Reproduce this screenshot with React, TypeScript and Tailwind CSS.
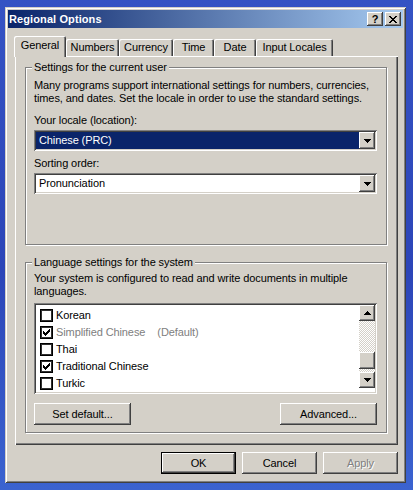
import React from "react";

const RAISED =
  "shadow-[inset_-1px_-1px_#404040,inset_1px_1px_#ffffff,inset_-2px_-2px_#808080,inset_2px_2px_#d4d0c8]";
const SUNKEN =
  "shadow-[inset_1px_1px_#808080,inset_-1px_-1px_#ffffff,inset_2px_2px_#404040,inset_-2px_-2px_#d4d0c8]";

function DownTri() {
  return (
    <svg width="7" height="4" viewBox="0 0 7 4" shapeRendering="crispEdges">
      <path d="M0 0h7v1H0zM1 1h5v1H1zM2 2h3v1H2zM3 3h1v1H3z" fill="#000" />
    </svg>
  );
}

function UpTri() {
  return (
    <svg width="7" height="4" viewBox="0 0 7 4" shapeRendering="crispEdges">
      <path d="M3 0h1v1H3zM2 1h3v1H2zM1 2h5v1H1zM0 3h7v1H0z" fill="#000" />
    </svg>
  );
}

function CheckBox({ checked }: { checked?: boolean }) {
  return (
    <div className="w-[13px] h-[13px] shrink-0 bg-white shadow-[inset_0_0_0_1px_#000000,inset_0_0_0_2px_#303030]">
      {checked && (
        <svg width="13" height="13" viewBox="0 0 13 13" shapeRendering="crispEdges">
          <path
            d="M3 5h1v3H3zM4 6h1v3H4zM5 7h1v3H5zM6 6h1v3H6zM7 5h1v3H7zM8 4h1v3H8zM9 3h1v3H9z"
            fill="#000"
          />
        </svg>
      )}
    </div>
  );
}

function Combo({ value, selected }: { value: string; selected?: boolean }) {
  return (
    <div className={`flex h-[21px] w-full p-[2px] bg-white ${SUNKEN}`}>
      <div
        className={
          selected
            ? "flex-1 flex items-center pl-[3px] bg-[#0a246a] text-white"
            : "flex-1 flex items-center pl-[3px] bg-white text-black"
        }
      >
        {value}
      </div>
      <div className={`w-[16px] h-[17px] bg-[#d4d0c8] flex items-center justify-center ${RAISED}`}>
        <DownTri />
      </div>
    </div>
  );
}

function Tab({ label, width, selected }: { label: string; width: string; selected?: boolean }) {
  if (selected) {
    return (
      <div
        className={`${width} h-[21px] flex justify-center pt-[3px] bg-[#d4d0c8] rounded-t-[2px] shadow-[inset_1px_1px_#ffffff,inset_-1px_0_#404040,inset_-2px_0_#808080]`}
      >
        {label}
      </div>
    );
  }
  return (
    <div
      className={`${width} h-[17px] mb-[1px] flex items-center justify-center bg-[#d4d0c8] rounded-t-[2px] shadow-[inset_1px_1px_#ffffff,inset_-1px_0_#404040,inset_-2px_0_#808080]`}
    >
      {label}
    </div>
  );
}

function Button({
  children,
  width,
  isDefault,
  disabled,
}: {
  children: React.ReactNode;
  width: string;
  isDefault?: boolean;
  disabled?: boolean;
}) {
  return (
    <div
      className={`${width} h-[22px] flex items-center justify-center bg-[#d4d0c8] ${RAISED} ${
        isDefault ? "border border-black" : ""
      } ${disabled ? "text-[#808080] [text-shadow:1px_1px_0_#ffffff]" : "text-black"}`}
    >
      {children}
    </div>
  );
}

function TitleBtn({ children }: { children: React.ReactNode }) {
  return (
    <div className={`w-[16px] h-[14px] bg-[#d4d0c8] flex items-center justify-center ${RAISED}`}>
      {children}
    </div>
  );
}

const items: { label: string; checked: boolean; gray?: boolean; extra?: string }[] = [
  { label: "Korean", checked: false },
  { label: "Simplified Chinese", checked: true, gray: true, extra: "(Default)" },
  { label: "Thai", checked: false },
  { label: "Traditional Chinese", checked: true },
  { label: "Turkic", checked: false },
];

export default function App() {
  return (
    <div className="w-[413px] h-[490px] overflow-hidden bg-[linear-gradient(180deg,#3553c4_0%,#2c45b8_55%,#3b63d0_100%)] pt-[7px] pl-[5px] font-['Liberation_Sans',Arial,sans-serif] text-[11px] leading-[13px] tracking-[-0.1px] text-black">
      <div className="w-[401px] h-[476px] bg-[#d4d0c8] p-[3px] flex flex-col shadow-[inset_1px_1px_#d4d0c8,inset_-1px_-1px_#404040,inset_2px_2px_#ffffff,inset_-2px_-2px_#808080]">
        {/* Title bar */}
        <div className="h-[18px] flex items-center bg-[linear-gradient(90deg,#0a246a,#a6caf0)] pl-[1px] pr-[2px]">
          <span className="flex-1 text-white font-bold text-[11px] tracking-[0.1px]">Regional Options</span>
          <div className="flex gap-[2px]">
            <TitleBtn>
              <span className="font-bold text-[11px] leading-[11px] text-black">?</span>
            </TitleBtn>
            <TitleBtn>
              <svg width="8" height="7" viewBox="0 0 8 7" shapeRendering="crispEdges">
                <path
                  d="M0 0h2v1H0zM6 0h2v1H6zM1 1h2v1H1zM5 1h2v1H5zM2 2h4v1H2zM3 3h2v1H3zM2 4h4v1H2zM1 5h2v1H1zM5 5h2v1H5zM0 6h2v1H0zM6 6h2v1H6z"
                  fill="#000"
                />
              </svg>
            </TitleBtn>
          </div>
        </div>

        {/* Client area */}
        <div className="flex-1 flex flex-col pt-[8px] pl-[7px] pr-[5px]">
          {/* Tabs */}
          <div className="relative z-10 flex items-end h-[21px] -ml-[1px]">
            <Tab label="General" width="w-[52px]" selected />
            <Tab label="Numbers" width="w-[53px]" />
            <Tab label="Currency" width="w-[54px]" />
            <Tab label="Time" width="w-[41px]" />
            <Tab label="Date" width="w-[42px]" />
            <Tab label="Input Locales" width="w-[77px]" />
          </div>

          {/* Panel */}
          <div className="-mt-[1px] h-[389px] bg-[#d4d0c8] pt-[5px] pl-[10px] shadow-[inset_1px_1px_#ffffff,inset_-1px_-1px_#404040,inset_-2px_-2px_#808080]">
            <fieldset className="m-0 min-w-0 w-[362px] h-[184px] border border-[#808080] shadow-[1px_1px_0_#ffffff,inset_1px_1px_0_#ffffff] pl-[8px] pr-[9px] pt-[5px] pb-0">
              <legend className="-ml-[2px] px-[2px] bg-[#d4d0c8]">Settings for the current user</legend>
              <p>
                Many programs support international settings for numbers, currencies,
                <br />
                times, and dates. Set the locale in order to use the standard settings.
              </p>
              <div className="mt-[9px]">Your locale (location):</div>
              <div className="mt-[3px]">
                <Combo value="Chinese (PRC)" selected />
              </div>
              <div className="mt-[6px]">Sorting order:</div>
              <div className="mt-[3px]">
                <Combo value="Pronunciation" />
              </div>
            </fieldset>

            <fieldset className="mt-[11px] m-0 min-w-0 w-[362px] h-[177px] border border-[#808080] shadow-[1px_1px_0_#ffffff,inset_1px_1px_0_#ffffff] pl-[8px] pr-[9px] pt-[3px] pb-0">
              <legend className="-ml-[2px] px-[2px] bg-[#d4d0c8]">Language settings for the system</legend>
              <p>
                Your system is configured to read and write documents in multiple
                <br />
                languages.
              </p>
              <div className={`mt-[5px] flex h-[91px] bg-white p-[2px] ${SUNKEN}`}>
                <div className="flex-1 pt-[2px] pl-[4px]">
                  {items.map((it) => (
                    <div key={it.label} className="h-[17px] flex items-center">
                      <CheckBox checked={it.checked} />
                      <span className={it.gray ? "ml-[3px] text-[#808080]" : "ml-[3px] text-black"}>
                        {it.label}
                      </span>
                      {it.extra && <span className="ml-[12px] text-[#808080]">{it.extra}</span>}
                    </div>
                  ))}
                </div>
                <div className="w-[16px] flex flex-col">
                  <div className={`h-[16px] bg-[#d4d0c8] flex items-center justify-center ${RAISED}`}>
                    <UpTri />
                  </div>
                  <div className="h-[31px] bg-[repeating-conic-gradient(#d4d0c8_0%_25%,#ffffff_0%_50%)] bg-[length:2px_2px]" />
                  <div className={`h-[17px] bg-[#d4d0c8] ${RAISED}`} />
                  <div className="h-[3px] bg-[repeating-conic-gradient(#d4d0c8_0%_25%,#ffffff_0%_50%)] bg-[length:2px_2px]" />
                  <div className={`h-[16px] bg-[#d4d0c8] flex items-center justify-center ${RAISED}`}>
                    <DownTri />
                  </div>
                </div>
              </div>
              <div className="mt-[9px] flex justify-between">
                <Button width="w-[97px]">Set default...</Button>
                <Button width="w-[97px]">Advanced...</Button>
              </div>
            </fieldset>
          </div>

          {/* Bottom buttons */}
          <div className="mt-[7px] flex justify-end gap-[6px]">
            <Button width="w-[75px]" isDefault>
              OK
            </Button>
            <Button width="w-[75px]">Cancel</Button>
            <Button width="w-[75px]" disabled>
              Apply
            </Button>
          </div>
        </div>
      </div>
    </div>
  );
}
